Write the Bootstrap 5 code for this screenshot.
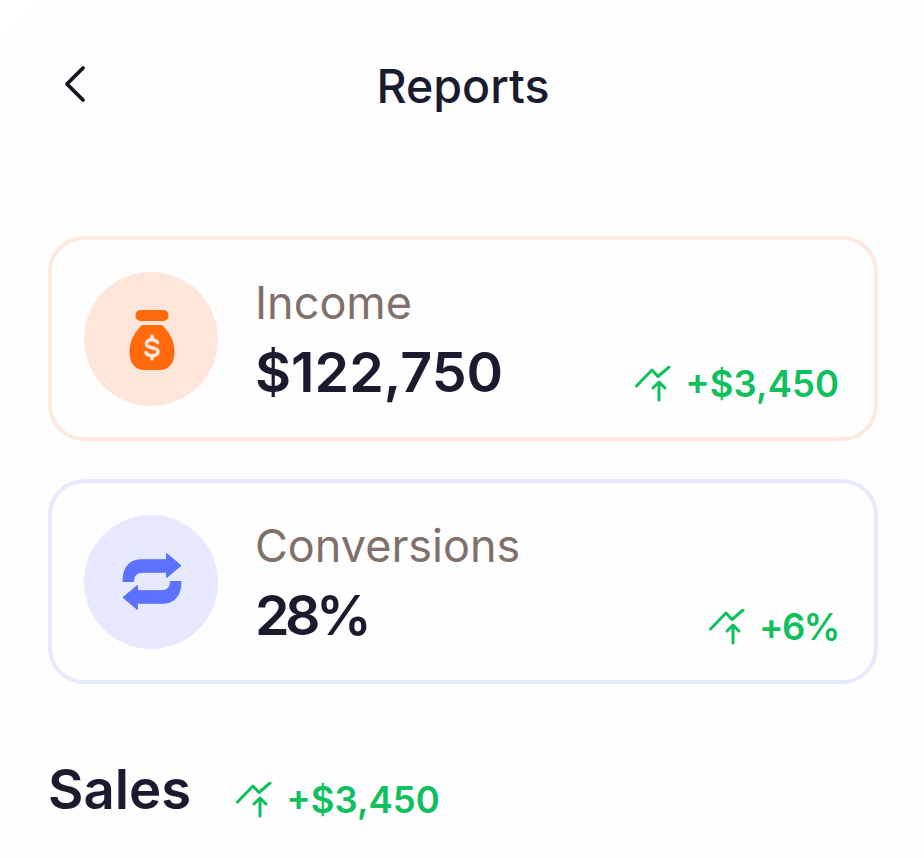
<!DOCTYPE html>
<html lang="en">
<head>
  <meta charset="UTF-8" />
  <meta name="viewport" content="width=device-width, initial-scale=1" />
  <title>Reports</title>
  <link href="https://cdn.jsdelivr.net/npm/bootstrap@5.3.0/dist/css/bootstrap.min.css" rel="stylesheet" />
  <style>
    html, body {
      height: 100%;
      overflow: hidden;
    }

    body {
      font-family: Inter, "Liberation Sans", sans-serif;
      background: #fff;
      color: #1a1b2f;
    }

    .screen {
      height: 858px;
      padding: 0 46px 0 48px;
      background: #fefefe;
      border-top-left-radius: 60px;
    }

    .top-bar {
      height: 236px;
      padding-bottom: 64px;
    }

    .back-btn {
      left: 15px;
      top: 64px;
    }

    .page-title {
      font-size: 46.5px;
      font-weight: 500;
      line-height: 48px;
      margin: 0;
    }

    .stat-box {
      height: 205px;
      border: 4px solid;
      border-radius: 36px;
      padding: 0 35px 0 32px;
      background: #fffefe;
    }

    .stat-income { border-color: #ffe8df; }
    .stat-conv { border-color: #e7e9ff; margin-top: 38px; }

    .stat-circle {
      width: 134px;
      height: 134px;
      margin-right: 37px;
    }

    .circle-income { background: #ffe6db; }
    .circle-conv { background: #e6e9ff; }

    .icon-nudge {
      margin-left: 2px;
    }

    .stat-text {
      padding-top: 4px;
    }

    .stat-label {
      font-size: 45px;
      line-height: 54px;
      color: #7f706a;
      margin-bottom: 8px;
    }

    .stat-value {
      font-size: 55.5px;
      font-weight: 600;
      line-height: 68px;
    }

    .value-tight {
      letter-spacing: -4.5px;
    }

    .delta {
      color: #10bf5e;
      font-size: 36.5px;
      font-weight: 600;
      line-height: 44px;
      gap: 14px;
    }

    .delta-card {
      margin-bottom: 31px;
    }

    .delta-tight {
      letter-spacing: -1.5px;
    }

    .delta-sales {
      margin-top: 22px;
    }

    .sales-row {
      margin-top: 72px;
      gap: 45px;
    }

    .sales-title {
      font-size: 54.5px;
      font-weight: 600;
      line-height: 64px;
      margin: 0;
    }
  </style>
</head>
<body>

<div class="screen">
  <div class="top-bar position-relative d-flex align-items-center justify-content-center">
    <a class="back-btn position-absolute" href="#" aria-label="Back">
      <svg width="26" height="40" viewBox="0 0 26 40" fill="none" stroke="#14141f" stroke-width="3.8" stroke-linecap="round" stroke-linejoin="round"><path d="M20 4 4 20l16 16"/></svg>
    </a>
    <h1 class="page-title">Reports</h1>
  </div>

  <div class="stat-box stat-income d-flex align-items-center">
    <div class="stat-circle circle-income rounded-circle d-flex align-items-center justify-content-center flex-shrink-0">
      <svg class="mt-1 icon-nudge" width="46" height="62" viewBox="0 0 46 62">
        <rect x="6.500" y="0" width="33" height="11" rx="5" fill="#ff6a0b"/>
        <path d="M13 15h20c6 6 12.500 14 12.500 27C45.500 54 39 60 31 60H15C7 60 .5 54 .5 42 .5 29 7 21 13 15z" fill="#ff6a0b"/>
        <path d="M28.500 32.500c-1-1.800-3-2.800-5.500-2.800-3.200 0-5.500 1.500-5.500 4 0 5.300 11.500 2.700 11.500 8 0 2.500-2.500 4-6 4-2.800 0-5-1-6-3M23 26v3.500M23 45.500V49" fill="none" stroke="#ffe6db" stroke-width="3.6" stroke-linecap="round"/>
      </svg>
    </div>
    <div class="stat-text flex-grow-1">
      <div class="stat-label">Income</div>
      <div class="stat-value">$122,750</div>
    </div>
    <div class="delta delta-card d-flex align-items-center align-self-end">
      <svg width="36" height="36" viewBox="0 0 36 36" fill="none" stroke="#10bf5e" stroke-width="3" stroke-linecap="round" stroke-linejoin="round"><path d="M1.500 20 17 4l6 6.500L34 1"/><path d="M24 34V17M18 22l6-6 6 6"/></svg>
      <span>+$3,450</span>
    </div>
  </div>

  <div class="stat-box stat-conv d-flex align-items-center">
    <div class="stat-circle circle-conv rounded-circle d-flex align-items-center justify-content-center flex-shrink-0">
      <svg class="icon-nudge" width="60" height="59" viewBox="0 0 62 60">
        <path id="loopArrow" d="M1 30C1 15 8 7.500 20 7.500h26V1l15 12.500L46 26v-5.500H22c-7 0-10 3.500-10 9.500z" fill="#5b72ff" stroke="#5b72ff" stroke-width="1" stroke-linejoin="round"/>
        <use href="#loopArrow" transform="rotate(180 31 30)"/>
      </svg>
    </div>
    <div class="stat-text flex-grow-1">
      <div class="stat-label">Conversions</div>
      <div class="stat-value value-tight">28%</div>
    </div>
    <div class="delta delta-card d-flex align-items-center align-self-end">
      <svg width="36" height="36" viewBox="0 0 36 36" fill="none" stroke="#10bf5e" stroke-width="3" stroke-linecap="round" stroke-linejoin="round"><path d="M1.500 20 17 4l6 6.500L34 1"/><path d="M24 34V17M18 22l6-6 6 6"/></svg>
      <span class="delta-tight">+6%</span>
    </div>
  </div>

  <div class="sales-row d-flex align-items-center">
    <h2 class="sales-title">Sales</h2>
    <div class="delta delta-sales d-flex align-items-center">
      <svg width="36" height="36" viewBox="0 0 36 36" fill="none" stroke="#10bf5e" stroke-width="3" stroke-linecap="round" stroke-linejoin="round"><path d="M1.500 20 17 4l6 6.500L34 1"/><path d="M24 34V17M18 22l6-6 6 6"/></svg>
      <span>+$3,450</span>
    </div>
  </div>
</div>

<script src="https://cdn.jsdelivr.net/npm/bootstrap@5.3.0/dist/js/bootstrap.bundle.min.js"></script>
</body>
</html>
